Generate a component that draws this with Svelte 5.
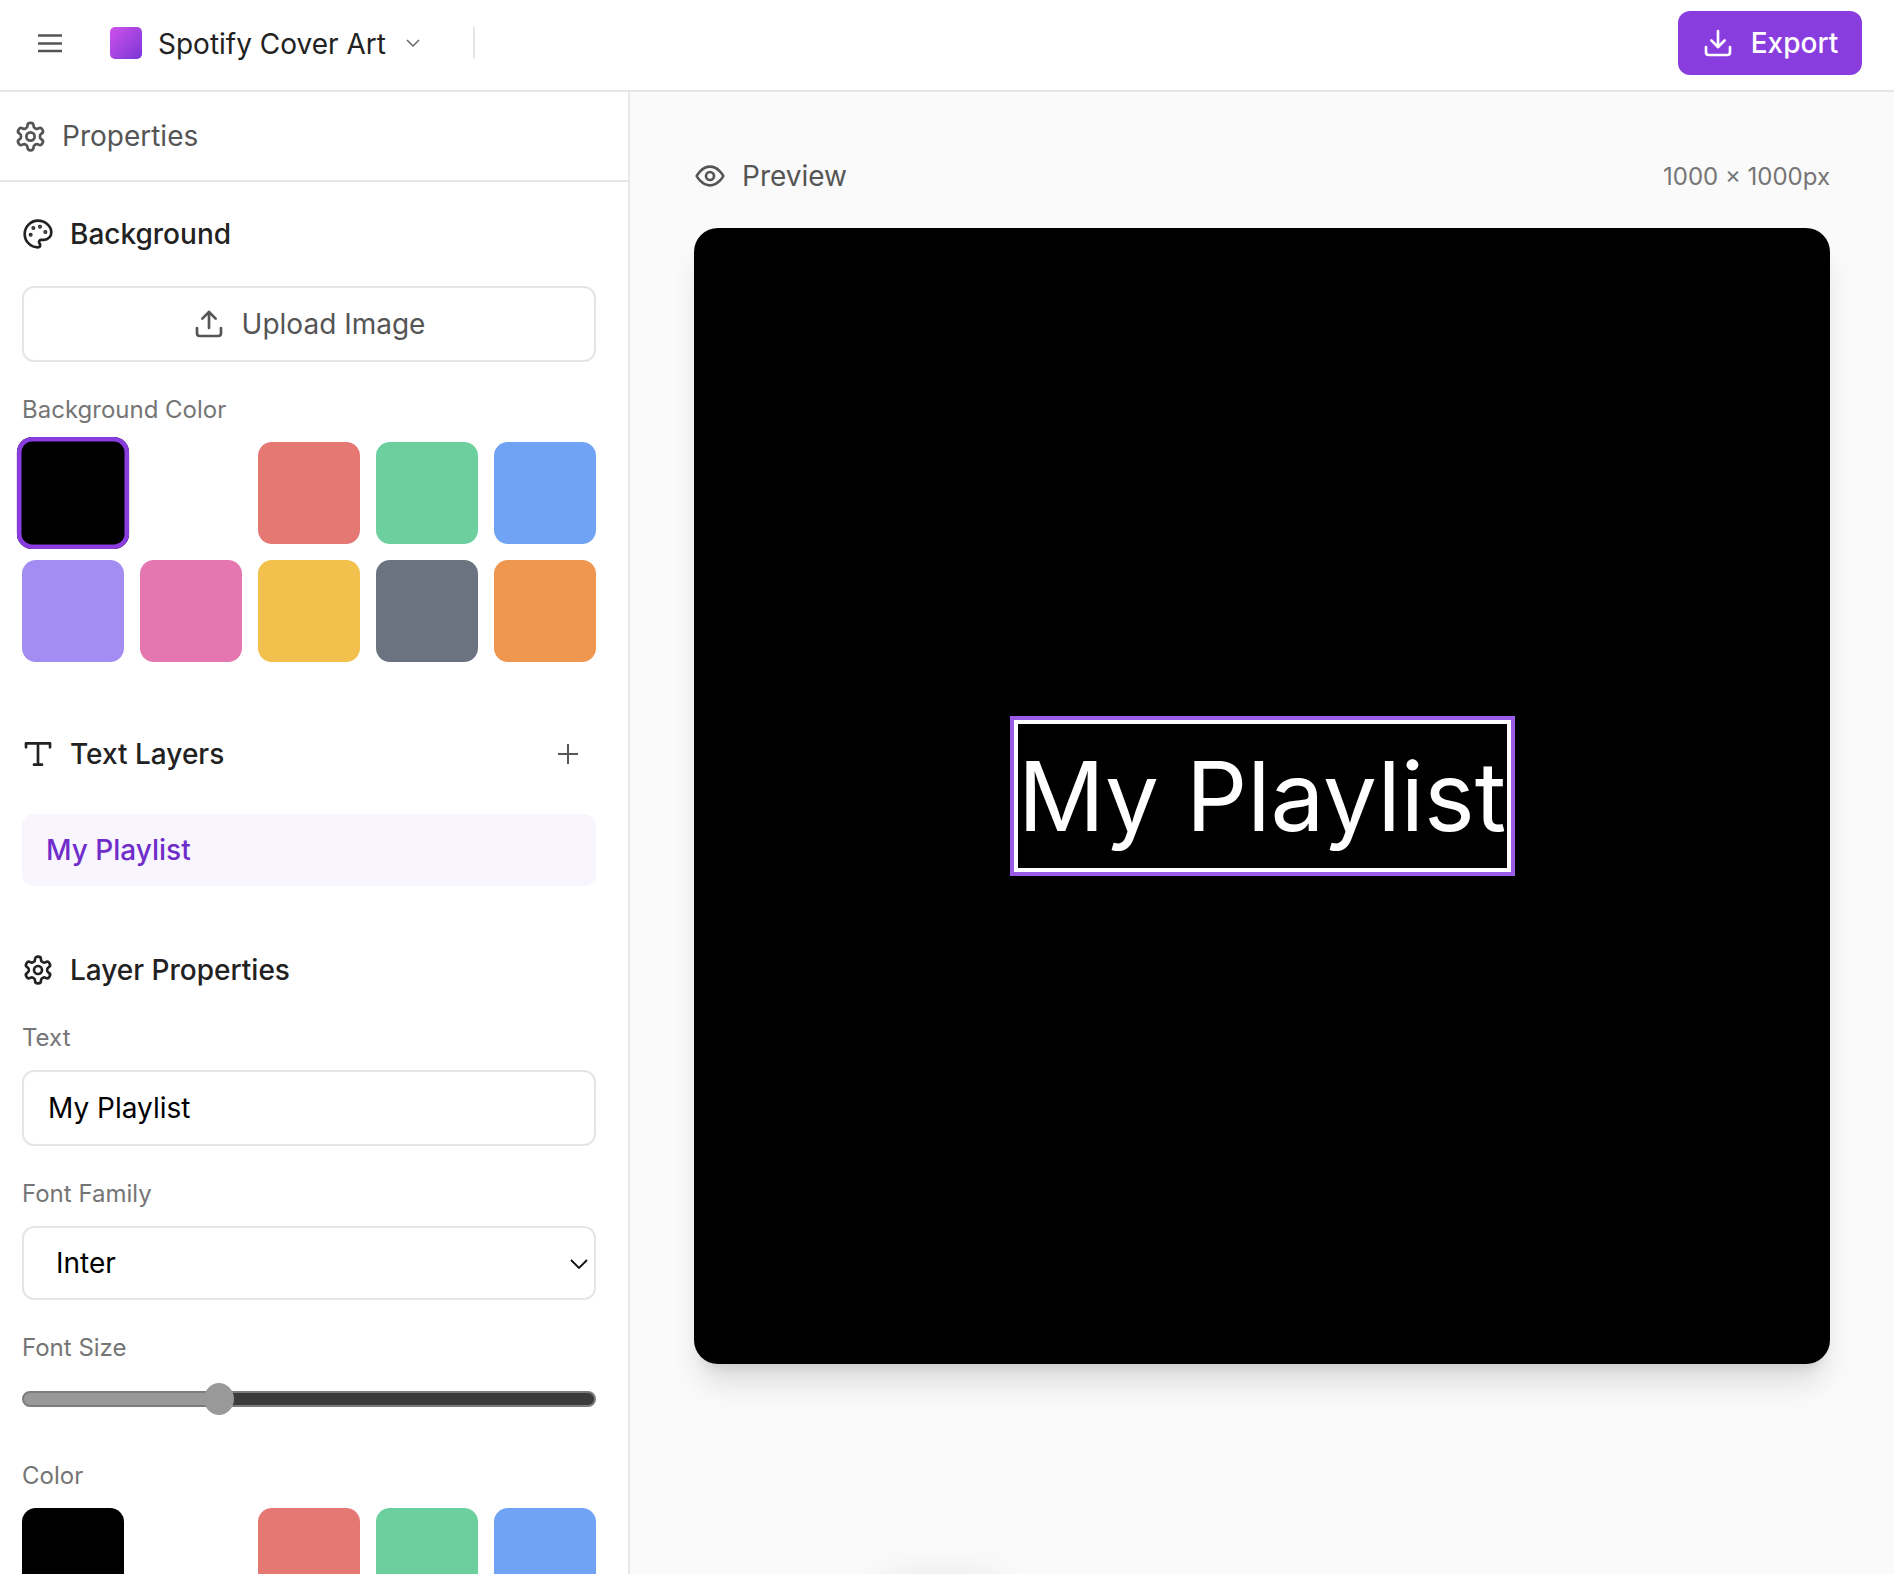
<script>
  const colors = ["#000000", "#ffffff", "#e57872", "#6bd09e", "#70a3f3", "#a38df2", "#e576b0", "#f2c04c", "#6b7280", "#ef964f"];
  const gearPath = "M12.22 2h-.44a2 2 0 0 0-2 2v.18a2 2 0 0 1-1 1.73l-.43.25a2 2 0 0 1-2 0l-.15-.08a2 2 0 0 0-2.73.73l-.22.38a2 2 0 0 0 .73 2.73l.15.1a2 2 0 0 1 1 1.72v.51a2 2 0 0 1-1 1.74l-.15.09a2 2 0 0 0-.73 2.73l.22.38a2 2 0 0 0 2.73.73l.15-.08a2 2 0 0 1 2 0l.43.25a2 2 0 0 1 1 1.73V20a2 2 0 0 0 2 2h.44a2 2 0 0 0 2-2v-.18a2 2 0 0 1 1-1.73l.43-.25a2 2 0 0 1 2 0l.15.08a2 2 0 0 0 2.73-.73l.22-.39a2 2 0 0 0-.73-2.73l-.15-.08a2 2 0 0 1-1-1.74v-.5a2 2 0 0 1 1-1.74l.15-.09a2 2 0 0 0 .73-2.73l-.22-.38a2 2 0 0 0-2.73-.73l-.15.08a2 2 0 0 1-2 0l-.43-.25a2 2 0 0 1-1-1.73V4a2 2 0 0 0-2-2z";
</script>

{#snippet gear(cls)}
  <svg class={cls} viewBox="0 0 24 24" fill="none" stroke="currentColor" stroke-width="2" stroke-linecap="round" stroke-linejoin="round">
    <path d={gearPath} />
    <circle cx="12" cy="12" r="3" />
  </svg>
{/snippet}

{#snippet swatches(selectedIndex)}
  <div class="swatches">
    {#each colors as c, i}
      <button class="swatch" class:selected={i === selectedIndex} style="background: {c}" aria-label={c}></button>
    {/each}
  </div>
{/snippet}

<div class="app">
  <header class="topbar">
    <button class="menu-btn" aria-label="Menu">
      <svg viewBox="0 0 24 20" fill="none" stroke="currentColor" stroke-width="2.4">
        <path d="M0 2.5h24M0 10.5h24M0 18h24" />
      </svg>
    </button>
    <span class="logo"></span>
    <span class="title">Spotify Cover Art</span>
    <svg class="title-chevron" viewBox="0 0 14 9" fill="none" stroke="currentColor" stroke-width="1.5">
      <path d="M1 1l6 6 6-6" />
    </svg>
    <span class="divider"></span>
    <button class="export">
      <svg viewBox="0 0 24 24" fill="none" stroke="currentColor" stroke-width="2" stroke-linecap="round" stroke-linejoin="round">
        <path d="M21 15v4a2 2 0 0 1-2 2H5a2 2 0 0 1-2-2v-4" />
        <path d="M7 10l5 5 5-5" />
        <path d="M12 15V3" />
      </svg>
      Export
    </button>
  </header>

  <div class="body">
    <aside class="sidebar">
      <div class="panel-head">
        {@render gear("panel-icon")}
        <span>Properties</span>
      </div>

      <div class="panel">
        <h3 class="heading">
          <svg class="head-icon" viewBox="0 0 24 24" fill="none" stroke="currentColor" stroke-width="2" stroke-linecap="round" stroke-linejoin="round">
            <circle cx="13.5" cy="6.5" r=".5" fill="currentColor" />
            <circle cx="17.5" cy="10.5" r=".5" fill="currentColor" />
            <circle cx="8.5" cy="7.5" r=".5" fill="currentColor" />
            <circle cx="6.5" cy="12.5" r=".5" fill="currentColor" />
            <path d="M12 2C6.5 2 2 6.5 2 12s4.5 10 10 10c.926 0 1.648-.746 1.648-1.688 0-.437-.18-.835-.437-1.125-.29-.289-.438-.652-.438-1.125a1.64 1.64 0 0 1 1.668-1.668h1.996c3.051 0 5.555-2.503 5.555-5.554C21.965 6.012 17.461 2 12 2z" />
          </svg>
          Background
        </h3>

        <button class="upload">
          <svg viewBox="0 0 24 24" fill="none" stroke="currentColor" stroke-width="2" stroke-linecap="round" stroke-linejoin="round">
            <path d="M21 15v4a2 2 0 0 1-2 2H5a2 2 0 0 1-2-2v-4" />
            <path d="M17 8l-5-5-5 5" />
            <path d="M12 3v12" />
          </svg>
          Upload Image
        </button>

        <div class="label">Background Color</div>
        {@render swatches(0)}

        <div class="heading-row">
          <h3 class="heading">
            <svg class="head-icon" viewBox="0 0 24 24" fill="none" stroke="currentColor" stroke-width="2" stroke-linecap="round" stroke-linejoin="round">
              <path d="M3 7V4h18v3" />
              <path d="M12 4v16" />
              <path d="M9 20h6" />
            </svg>
            Text Layers
          </h3>
          <svg class="plus" viewBox="0 0 22 22" fill="none" stroke="currentColor" stroke-width="2">
            <path d="M1 11h20M11 1v20" />
          </svg>
        </div>

        <div class="layer-item">My Playlist</div>

        <h3 class="heading layer-props">
          {@render gear("head-icon")}
          Layer Properties
        </h3>

        <div class="label text-label">Text</div>
        <input class="field" value="My Playlist" />

        <div class="label">Font Family</div>
        <div class="select-wrap">
          <select class="field select">
            <option>Inter</option>
          </select>
          <svg class="select-chevron" viewBox="0 0 18 10" fill="none" stroke="currentColor" stroke-width="1.8">
            <path d="M1 1l8 8 8-8" />
          </svg>
        </div>

        <div class="label">Font Size</div>
        <input class="range" type="range" min="0" max="100" step="0.1" value="33.3" />

        <div class="label color-label">Color</div>
        {@render swatches(-1)}
      </div>
    </aside>

    <main class="main">
      <div class="preview-head">
        <div class="preview-title">
          <svg viewBox="0 0 24 24" fill="none" stroke="currentColor" stroke-width="2" stroke-linecap="round" stroke-linejoin="round">
            <path d="M2 12s3.6-7 10-7 10 7 10 7-3.6 7-10 7-10-7-10-7z" />
            <circle cx="12" cy="12" r="3" />
          </svg>
          Preview
        </div>
        <span class="dims">1000 × 1000px</span>
      </div>
      <div class="canvas">
        <div class="text-layer">My Playlist</div>
      </div>
      <div class="peek"></div>
    </main>
  </div>
</div>

<style>
  :global(body) {
    margin: 0;
    background: #fff;
  }
  .app {
    width: 1894px;
    height: 1574px;
    overflow: hidden;
    display: flex;
    flex-direction: column;
    font-family: Inter, "Liberation Sans", sans-serif;
    color: #222;
  }
  button {
    font: inherit;
    padding: 0;
    cursor: pointer;
  }

  .topbar {
    height: 92px;
    box-sizing: border-box;
    flex: none;
    display: flex;
    align-items: center;
    padding: 0 32px 4px 38px;
    border-bottom: 2px solid #e5e5e5;
    background: #fff;
  }
  .menu-btn {
    border: none;
    background: none;
    color: #555;
    width: 24px;
    height: 20px;
    display: flex;
    margin-right: 48px;
  }
  .menu-btn svg {
    width: 24px;
    height: 20px;
  }
  .logo {
    width: 32px;
    height: 32px;
    border-radius: 5px;
    background: linear-gradient(135deg, #d053ea, #7a35d6);
    margin-right: 16px;
  }
  .title {
    font-size: 28px;
    color: #222;
    margin-right: 20px;
    padding-top: 1px;
  }
  .title-chevron {
    width: 14px;
    height: 9px;
    color: #666;
  }
  .divider {
    width: 2px;
    height: 32px;
    background: #e5e5e5;
    margin-left: 53px;
  }
  .export {
    margin-left: auto;
    width: 184px;
    height: 64px;
    border: none;
    border-radius: 12px;
    background: #8a3ddf;
    color: #fff;
    font-size: 28px;
    font-weight: 500;
    display: flex;
    align-items: center;
    justify-content: center;
    gap: 17px;
  }
  .export svg {
    width: 32px;
    height: 32px;
  }

  .body {
    flex: 1;
    display: flex;
    min-height: 0;
  }
  .sidebar {
    width: 628px;
    flex: none;
    border-right: 2px solid #e8e8e8;
    background: #fff;
    overflow: hidden;
  }
  .panel-head {
    height: 88px;
    display: flex;
    align-items: center;
    gap: 15px;
    padding-left: 14px;
    border-bottom: 2px solid #e5e5e5;
    font-size: 28px;
    color: #555;
  }
  .panel-head :global(.panel-icon) {
    width: 33px;
    height: 33px;
  }
  .panel {
    padding: 35px 32px 0 22px;
  }
  .heading {
    margin: 0;
    height: 34px;
    display: flex;
    align-items: center;
    gap: 16px;
    font-size: 28px;
    font-weight: 500;
    color: #222;
  }
  .heading :global(.head-icon) {
    width: 32px;
    height: 32px;
    flex: none;
  }
  .upload {
    width: 100%;
    height: 76px;
    margin-top: 35px;
    border: 2px solid #e5e5e5;
    border-radius: 12px;
    background: #fff;
    color: #555;
    font-size: 28px;
    display: flex;
    align-items: center;
    justify-content: center;
    gap: 17px;
  }
  .upload svg {
    width: 32px;
    height: 32px;
  }
  .label {
    height: 34px;
    line-height: 34px;
    margin: 31px 0 15px;
    font-size: 24px;
    color: #757575;
  }
  .swatches {
    display: grid;
    grid-template-columns: repeat(5, 102px);
    grid-auto-rows: 102px;
    gap: 16px;
  }
  .swatch {
    border: none;
    border-radius: 14px;
    box-sizing: border-box;
  }
  .swatch.selected {
    box-shadow: inset 0 0 0 4.2px #8a3ddf;
    transform: scale(1.1);
  }
  .heading-row {
    display: flex;
    align-items: center;
    justify-content: space-between;
    margin-top: 75px;
    padding-right: 17px;
  }
  .plus {
    width: 22px;
    height: 22px;
    color: #555;
  }
  .layer-item {
    height: 72px;
    margin-top: 43px;
    padding-left: 24px;
    display: flex;
    align-items: center;
    border-radius: 12px;
    background: #f8f5fe;
    color: #6f2dc9;
    font-size: 28px;
    font-weight: 500;
  }
  .layer-props {
    margin-top: 67px;
  }
  .text-label {
    margin-top: 34px;
  }
  .field {
    display: block;
    width: 100%;
    height: 76px;
    box-sizing: border-box;
    border: 2px solid #e5e5e5;
    border-radius: 12px;
    background: #fff;
    padding: 0 24px;
    font: inherit;
    font-size: 28px;
    color: #000;
    outline: none;
  }
  .select-wrap {
    position: relative;
  }
  .select {
    height: 74px;
    padding-left: 32px;
    appearance: none;
  }
  .select-chevron {
    position: absolute;
    right: 8px;
    top: 33px;
    width: 18px;
    height: 10px;
    color: #111;
  }
  .range {
    display: block;
    width: 100%;
    height: 32px;
    margin: 18px 0 0;
    appearance: none;
    background: none;
  }
  .range::-webkit-slider-runnable-track {
    height: 16px;
    box-sizing: border-box;
    border: 2px solid #7c7c7c;
    border-radius: 8px;
    background: linear-gradient(to right, #999 34%, #3b3b3b 34%);
  }
  .range::-webkit-slider-thumb {
    appearance: none;
    width: 30px;
    height: 32px;
    margin-top: -10px;
    border-radius: 50%;
    background: #999;
  }
  .color-label {
    margin-top: 44px;
  }

  .main {
    flex: 1;
    position: relative;
    background: #fafafa;
    padding: 0 64px;
    overflow: hidden;
  }
  .preview-head {
    height: 136px;
    display: flex;
    align-items: center;
    justify-content: space-between;
    padding-top: 32px;
    box-sizing: border-box;
  }
  .preview-title {
    display: flex;
    align-items: center;
    gap: 16px;
    font-size: 28px;
    color: #555;
  }
  .preview-title svg {
    width: 32px;
    height: 32px;
  }
  .dims {
    font-size: 24px;
    color: #757575;
  }
  .canvas {
    width: 1136px;
    height: 1136px;
    border-radius: 24px;
    background: #000;
    box-shadow: 0 24px 30px -6px rgba(0, 0, 0, 0.12), 0 10px 12px -7px rgba(0, 0, 0, 0.1);
    display: flex;
    align-items: center;
    justify-content: center;
  }
  .text-layer {
    width: 497px;
    height: 152px;
    box-sizing: border-box;
    border: 4px solid #fff;
    outline: 4px solid #9b5de9;
    display: flex;
    align-items: center;
    justify-content: center;
    color: #fff;
    font-size: 96px;
    white-space: nowrap;
  }
  .peek {
    position: absolute;
    left: 252px;
    bottom: -39px;
    width: 120px;
    height: 30px;
    border-radius: 12px;
    box-shadow: 0 0 40px rgba(0, 0, 0, 0.12);
  }
</style>
